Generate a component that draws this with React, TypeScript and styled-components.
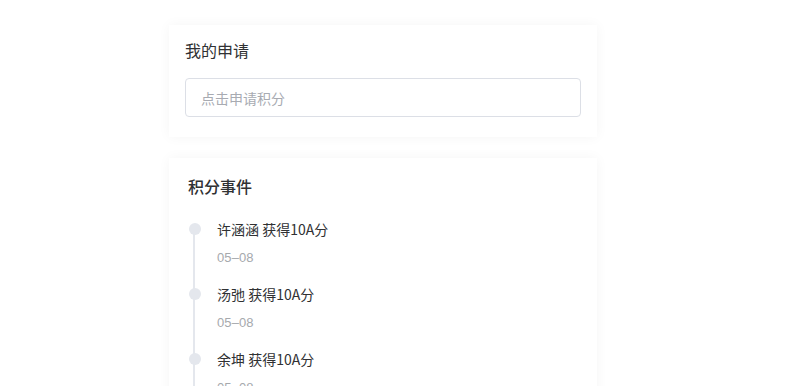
import React from "react";
import styled, { createGlobalStyle } from "styled-components";

const GlobalStyle = createGlobalStyle`
  body {
    margin: 0;
    background: #ffffff;
    font-family: "Noto Sans CJK SC", "Liberation Sans", sans-serif;
    color: #303133;
  }
`;

const Page = styled.div`
  width: 428px;
  margin-left: 169px;
  padding-top: 25px;
  display: flex;
  flex-direction: column;
  gap: 21px;
`;

const Card = styled.section<{ $pad: number; $top: number }>`
  background: #fff;
  box-shadow: 0 0 12px rgba(0, 0, 0, 0.045);
  padding: ${(p) => p.$top}px 16px 20px ${(p) => p.$pad}px;
`;

const Title = styled.h3<{ $bold?: boolean }>`
  margin: 0;
  font-size: 16px;
  line-height: 26px;
  font-weight: ${(p) => (p.$bold ? 500 : 400)};
  color: #303133;
`;

const Input = styled.input`
  box-sizing: border-box;
  margin-top: 15px;
  width: 396px;
  height: 39px;
  border: 1px solid #dcdfe6;
  border-radius: 4px;
  padding: 0 15px;
  font-family: inherit;
  font-size: 14px;
  color: #606266;
  outline: none;
  &::placeholder {
    color: #a8abb2;
  }
`;

const Timeline = styled.ul`
  list-style: none;
  margin: 20px 0 0;
  padding: 0 0 0 1px;
`;

const Item = styled.li`
  position: relative;
  padding-left: 28px;
  padding-bottom: 17px;
`;

const Tail = styled.div`
  position: absolute;
  left: 4px;
  top: 8px;
  height: 100%;
  border-left: 2px solid #e4e7ed;
`;

const Dot = styled.div`
  position: absolute;
  left: 0;
  top: 4px;
  width: 12px;
  height: 12px;
  border-radius: 50%;
  background: #e4e7ed;
`;

const Content = styled.div`
  font-size: 14px;
  line-height: 20px;
  color: #303133;
`;

const Stamp = styled.div`
  margin-top: 10px;
  font-size: 13px;
  line-height: 18px;
  letter-spacing: 0.1px;
  color: #a6a9ad;
  font-family: "Liberation Sans", "Noto Sans CJK SC", sans-serif;
`;

const events = [
  { text: "许涵涵 获得10A分", date: "05–08" },
  { text: "汤弛 获得10A分", date: "05–08" },
  { text: "余坤 获得10A分", date: "05–08" },
];

export default function App() {
  return (
    <>
      <GlobalStyle />
      <Page>
        <Card $pad={16} $top={12}>
          <Title>我的申请</Title>
          <Input placeholder="点击申请积分" />
        </Card>
        <Card $pad={19} $top={15}>
          <Title $bold>积分事件</Title>
          <Timeline>
            {events.map((e, i) => (
              <Item key={i}>
                <Tail />
                <Dot />
                <Content>{e.text}</Content>
                <Stamp>{e.date}</Stamp>
              </Item>
            ))}
          </Timeline>
        </Card>
      </Page>
    </>
  );
}
